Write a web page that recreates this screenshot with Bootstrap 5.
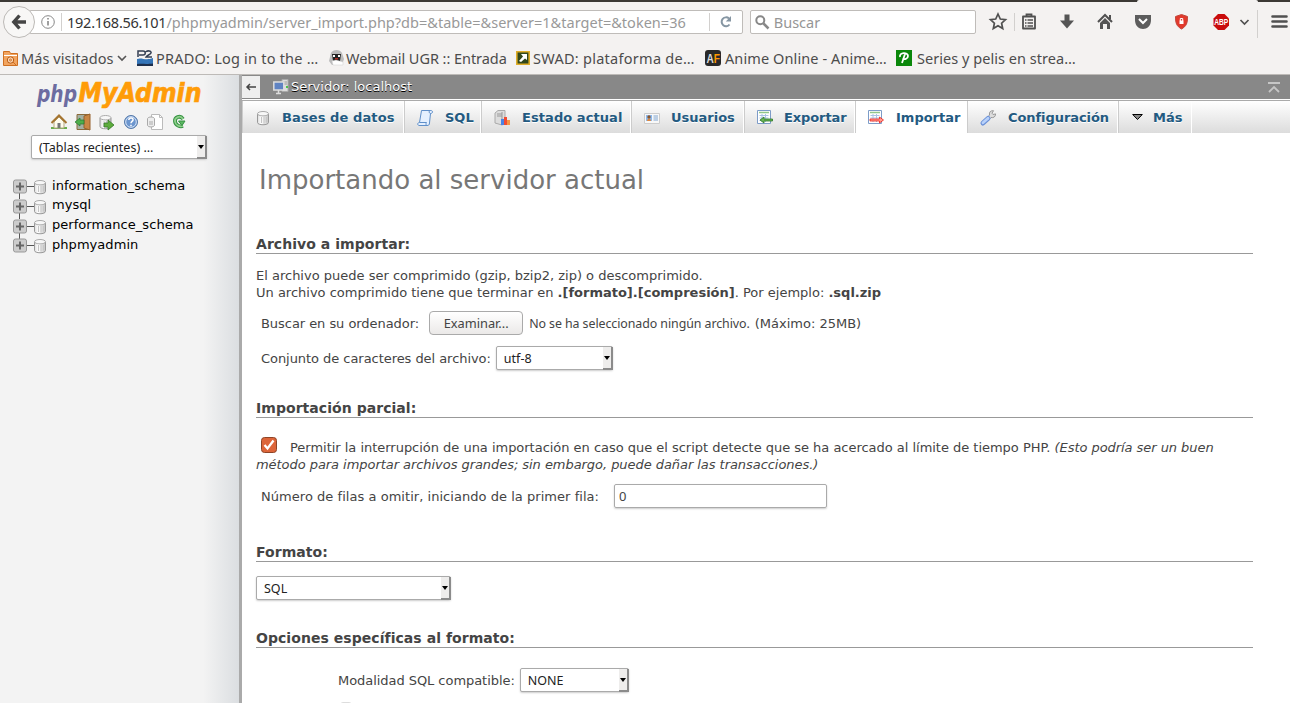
<!DOCTYPE html>
<html lang="es">
<head>
<meta charset="utf-8">
<title>phpMyAdmin - Importar</title>
<link href="https://cdn.jsdelivr.net/npm/bootstrap@5.3.0/dist/css/bootstrap.min.css" rel="stylesheet">
<style>
body{width:1290px;height:703px;overflow:hidden;background:#fff;color:#444;font:13px/16.5px "DejaVu Sans",sans-serif}
svg{display:block;flex:none;overflow:visible}
.ui{font-family:"Noto Sans",sans-serif}
.browser{height:75px;background:#f4f2f1;border-bottom:1px solid #bdbab7;color:#4c4c4c}
.strip{height:2px;background:#3c3935}
.strip i{display:block;margin-left:1137px;width:121px;height:2px;background:#f4f2f1;border-radius:4px 4px 0 0}
.toolrow{height:40px;padding-left:3px}
.back{width:32px;height:32px;border:1px solid #bcb9b6;border-radius:50%;background:#f8f7f6;z-index:1}
.url{width:714px;height:24px;margin-left:-6px;border:1px solid #bfbcb9;border-radius:2px;background:#fff;font-size:14.5px;padding-left:11px;color:#999}
.url b{font-weight:400;color:#333;letter-spacing:-.25px}
.url .path{width:524px;letter-spacing:.02px;white-space:nowrap}
.vline{width:1px;height:18px;background:#d2d0ce}
.find{width:226px;height:24px;margin-left:7px;border:1px solid #bfbcb9;border-radius:2px;background:#fff;color:#969696;font-size:14.5px;padding-left:4px;gap:1px}
.marks{height:31px;padding:1px 0 0 3px;grid-template-columns:134px 192px 187px 189px 191px auto;font-size:14.5px;white-space:nowrap}
.marks>div{gap:3px}
.side{width:239px;background:linear-gradient(90deg,#f3f3f3 85%,#dbdee1);color:#000}
.split{width:3px;background:#aaa}
.logo{margin:5px 0 0 36px}
.icons{margin:6px 0 0 51px;gap:8px}
.pick{position:relative;height:24px;border:1px solid #aaa;border-radius:2px;background:#fff;box-shadow:0 1px 2px #ccc;color:#222;font-size:12.5px;line-height:23px;padding-left:7px}
.pick::before{content:"";position:absolute;right:-1px;top:0;width:10px;height:23px;background:#eeedec;border-right:2px solid #8b8b8b;border-bottom:2px solid #8b8b8b}
.pick::after{content:"";position:absolute;right:2px;top:9px;border:3px solid transparent;border-top:4px solid #000;border-bottom:0}
.recent{width:176px;margin:5px 0 0 31px}
.tree{margin:17px 0 0 13px}
.tree>div{height:19.8px}
.tree span{margin-left:6px;margin-top:0;letter-spacing:.05px}
.tree div:last-child span{margin-top:-1px}
.crumb{height:24px;background:#888;color:#fff;text-shadow:0 1px 0 #000}
.fold{width:18px;height:22px;background:#eee}
.tabs{height:33px;margin-top:1px;border-top:1px solid #aaa;background:linear-gradient(#fff,#dcdcdc);color:#235a81;font-weight:700;text-shadow:0 1px 0 #fff}
.tabs>div{border-right:1px solid #fff;border-left:1px solid #ccc;padding:2px 0 0 12px;gap:11px;white-space:nowrap}
.tabs svg{margin-top:-1px}
.tabs>div.now{background:#fff}
.body-area{padding:0 37px 0 14px}
.title{height:40px;margin:27px 0 0 3px;font-size:26px;line-height:40px;color:#777}
.legend{height:20px;border-bottom:1px solid #999;font-size:14px;font-weight:700;line-height:20px;letter-spacing:.05px;color:#444}
.low{line-height:21px}
.browse{width:94px;height:24px;margin:0 6px 0 9px;border:1px solid #aaa;border-radius:4px;background:linear-gradient(#fff,#ebe9e8);color:#444;font-size:12.8px;line-height:23px}
.line{height:24px;padding:2px 0 0 5px;white-space:nowrap}
.line>div{margin-bottom:2px}
.tight{letter-spacing:-.05px}
.num{width:213px;height:24px;margin-left:15px;border:1px solid #aaa;border-radius:2px;box-shadow:0 1px 2px #ccc;padding-left:4px;line-height:23px}
.tick{display:inline-block;vertical-align:-1px;margin:0 13px 0 5px}
.next{width:12px;height:12px;margin:10px 0 0 84px;border:1px solid #ddd;border-radius:3px}
</style>
</head>
<body>
<svg width="0" height="0" class="position-absolute"><defs>
<linearGradient id="metal"><stop stop-color="#ddd"/><stop offset=".35" stop-color="#fff"/><stop offset="1" stop-color="#c4c4c4"/></linearGradient>
<symbol id="db" viewBox="0 0 16 16"><path d="M2.500 4v8.500c0 3 11 3 11 0V4" fill="url(#metal)" stroke="#999"/><ellipse cx="8" cy="3.700" rx="5.500" ry="2.200" fill="#f7f7f7" stroke="#aaa"/><path d="M6.500 7v6M9 7v6.500M11.300 7v5.500" stroke="#c4c4c4"/></symbol>
<symbol id="sheet" viewBox="0 0 16 16"><path d="M.5.5h13v13H.5z" fill="#fff" stroke="#7d9cc8"/><path d="M2 2.500h10" stroke="#91c78b" stroke-width="1.500"/><path d="M2.500 5.500h9M2.500 8h9M2.500 10.500h9M5 4v8M8.500 4v8" stroke="#abc3e5"/></symbol>
</defs></svg>

<header class="browser ui">
  <div class="strip"><i></i></div>
  <div class="toolrow d-flex align-items-center">
    <div class="back d-flex align-items-center justify-content-center"><svg width="16" height="16" viewBox="0 0 16 16" fill="none" stroke="#454545" stroke-width="3.400"><path d="M8.500 1.500 2.800 8l5.700 6.500M3 8h12"/></svg></div>
    <div class="url d-flex align-items-center">
      <svg width="14" height="14" viewBox="0 0 14 14" fill="none" stroke="#888"><circle cx="7" cy="7" r="6.300"/><path d="M7 6v4.500M7 3v1.500" stroke-width="1.600"/></svg>
      <span class="vline" style="margin:0 5px 0 6px"></span>
      <b>192.168.56.101</b><span class="path">/phpmyadmin/server_import.php?db=&amp;table=&amp;server=1&amp;target=&amp;token=36</span>
      <span class="vline" style="margin-left:19px"></span>
      <svg style="margin-left:9px" width="15" height="14" viewBox="0 0 15 14" fill="none"><path d="M10 3.500A4.400 4.400 0 1 0 10.500 9.500" stroke="#8696a3" stroke-width="2"/><path d="M12 1v5.500H6.800z" fill="#8696a3"/></svg>
    </div>
    <div class="find d-flex align-items-center"><svg width="14" height="14" viewBox="0 0 14 14" fill="none" stroke="#888" stroke-width="2"><circle cx="5.300" cy="5.300" r="4"/><path d="m8.500 8.500 5 5" stroke-width="2.500"/></svg><span>&nbsp;Buscar</span></div>
    <svg width="308" height="32" viewBox="0 0 308 32" style="margin-left:5px" fill="none" stroke="#505050">
      <path d="m17 8 2.300 5 5.200.6-3.900 3.600 1.100 5.300-4.700-2.700-4.700 2.700 1.100-5.300-3.900-3.600 5.200-.6z" stroke-width="1.700"/>
      <path d="M33.500 7v18M276.500 4v28" stroke="#d2d0ce"/>
      <path d="M42 10.500h12v12H42z" stroke-width="1.800" stroke-linejoin="round"/><path d="M45.500 10V8.500h5V10" stroke-width="1.800"/><path d="M44 14h1.500m1 0H52m-8 3h1.500m1 0H52m-8 3h1.500m1 0H52" stroke-width="1.300"/>
      <path d="M83.500 8.500h5v6H93l-7 8-7-8h4.500z" fill="#555" stroke="none"/>
      <path d="m117 16 7-7 7 7" stroke-width="2"/><path d="M119 17l5-5 5 5v6h-3v-5h-4v5h-3z" fill="#555" stroke="none"/><path d="M129 9v4" stroke-width="2"/>
      <path d="M154 9h16v5c0 12-16 12-16 0z" fill="#5d5d5d" stroke="none"/><path d="m158 13 4 4 4-4" stroke="#fff" stroke-width="2"/>
      <path d="m200.500 8.500 6 2c0 7-1 9.500-6 12.500-5-3-6-5.500-6-12.500z" fill="#e2392c" stroke="#c1473b"/><path d="M198.500 14.500h4v3.500h-4z" fill="#fff" stroke="none"/><path d="M199.300 15v-2.500h2.400V15" stroke="#fff"/>
      <path d="m237 8-4.500 4.500v7L237 24h6.500l4.500-4.500v-7L243.500 8z" fill="#c90c0c" stroke="none"/>
      <text x="240.300" y="19.200" text-anchor="middle" font-family="Liberation Sans" font-weight="700" font-size="8.500" textLength="14" lengthAdjust="spacingAndGlyphs" fill="#fff" stroke="none">ABP</text>
      <path d="m259.500 14 4 4 4-4" stroke-width="1.700"/><path d="M291.500 10.500h14M291.500 15.500h14M291.500 20.500h14" stroke-width="2.600" stroke-linecap="round"/>
    </svg>
  </div>
  <div class="marks d-grid align-items-center">
    <div class="d-flex align-items-center"><svg width="15" height="15" viewBox="0 0 15 15" fill="none" stroke="#cf7022"><path d="M.5 14.500V.5h6l1 2h7v12z" fill="#f2a45f"/><path d="M1 4.500h13" stroke="#fff"/><circle cx="7.500" cy="9" r="3.200" fill="#fbd7b5" stroke="#b85d16"/><circle cx="7.500" cy="9" r="1"/><path d="m10 11 3 3"/></svg><span style="letter-spacing:.06px">Más visitados</span><svg width="10" height="8" viewBox="0 0 10 8"><path d="m1 2 4 4 4-4" fill="none" stroke="#555" stroke-width="1.600"/></svg></div>
    <div class="d-flex align-items-center"><svg width="16" height="16" viewBox="0 0 16 16"><path d="M1 7V1h5c3 0 3 4 0 4H2M9 2c1-2 6-1 5 1-1 2-4 2-5 4h6" fill="none" stroke="#333e52" stroke-width="1.500"/><path d="M0 9c5-2 8 2 16-1v6H0z" fill="#3575b8"/><path d="M0 14c6-.5 9 .5 16-.5V16H0z" fill="#1e2f4c"/></svg><span style="letter-spacing:.22px">PRADO: Log in to the …</span></div>
    <div class="d-flex align-items-center"><svg width="15" height="16" viewBox="0 0 15 16"><path d="M2 3c2-4 9-4 11 0l2 6-2 6H3L0 11z" fill="#bbb"/><path d="M3 4h9l-1 7H4z" fill="#222"/><path d="m3 11 4-1 7 2v3H4z" fill="#fff" stroke="#ccc" stroke-width=".5"/><path d="M4 5h2v2H4zm5 0h2v2H9z" fill="#fff"/><path d="M6 8h3v1.500H6z" fill="#b52a22"/></svg><span style="letter-spacing:-.05px;margin-left:-1px">Webmail UGR :: Entrada</span></div>
    <div class="d-flex align-items-center"><svg width="14" height="14" viewBox="0 0 14 14"><path d="M.8.8h12.400v12.400H.8z" fill="#31471b" stroke="#dfad28" stroke-width="1.600"/><path d="M5 3h6v6L9 7.500 5 11l-2-1 4-4.500z" fill="#fff"/></svg><span style="letter-spacing:.27px">SWAD: plataforma de…</span></div>
    <div class="d-flex align-items-center"><svg width="16" height="16" viewBox="0 0 16 16"><rect width="16" height="16" rx="3" fill="#292929"/><text x="1.500" y="12.500" font-family="Liberation Sans" font-size="12" font-weight="700" textLength="13.500" lengthAdjust="spacingAndGlyphs"><tspan fill="#ddd">A</tspan><tspan fill="#ff9900">F</tspan></text></svg><span style="letter-spacing:.1px;margin-left:1px">Anime Online - Anime…</span></div>
    <div class="d-flex align-items-center"><svg width="16" height="16" viewBox="0 0 16 16"><path d="M0 0h16v16H0z" fill="#0a870a"/><path d="M4 7c-1-5 8-5 8-1 0 3-4 4-5 2M9 4l-3 9" stroke="#fff" stroke-width="1.800" fill="none"/></svg><span style="letter-spacing:.04px;margin-left:2px">Series y pelis en strea…</span></div>
  </div>
</header>

<div class="d-flex" style="height:628px">
  <aside class="side flex-shrink-0">
    <svg class="logo" width="168" height="28" font-family="DejaVu Sans" font-weight="700" font-style="italic"><text x="1" y="22" font-size="23.500" fill="#6c6ca0" textLength="40" lengthAdjust="spacingAndGlyphs">php</text><text x="42.500" y="22" font-size="26" fill="#ff9c08" stroke="#ff9c08" stroke-width=".7" textLength="123" lengthAdjust="spacingAndGlyphs">MyAdmin</text></svg>
    <div class="icons d-flex">
      <svg width="16" height="16" viewBox="0 0 16 16"><path d="M0 14h16" stroke="#69ad4c" stroke-width="2"/><path d="M3 8v6h10V8L8 3z" fill="#fffbed" stroke="#b5a981"/><path d="M.5 9 8 1.500 15.500 9" fill="none" stroke="#a57430" stroke-width="2"/><path d="M6.500 9h3v5h-3z" fill="#777"/></svg>
      <svg width="16" height="16" viewBox="0 0 16 16"><path d="M2 .5h12v15H2z" fill="#a3b0a3" stroke="#8b6a3a"/><path d="m9 2 6-2v16l-6-2z" fill="#c98644" stroke="#96612d"/><path d="M0 8l5-4v2h4v4H5v2z" fill="#4dae4b" stroke="#287532" stroke-width=".7"/></svg>
      <svg width="16" height="16" viewBox="0 0 16 16"><use href="#db" x="-1.500" width="16" height="16"/><path d="M5 9h4V6l6 5-6 5v-3H5z" fill="#5dad3c" stroke="#35762b" stroke-width=".8"/></svg>
      <svg width="16" height="16" viewBox="0 0 16 16"><circle cx="8" cy="8" r="6.500" fill="#6c96cf" stroke="#567aa9"/><circle cx="8" cy="8" r="5.300" fill="none" stroke="#d8e5f7"/><path d="M5.800 6c.2-3 4.800-2.500 4.200 0-.3 1.500-2 1.500-2 3.300M8 10.700v1.500" fill="none" stroke="#fff" stroke-width="1.500"/></svg>
      <svg width="16" height="16" viewBox="0 0 16 16"><path d="M4.500.5h8l3 3v12h-11z" fill="#fff" stroke="#bbb"/><path d="M12.500.5v3h3" fill="none" stroke="#bbb"/><path d="M.5 4.500c1-2 6-2 7 0v7c-1 2-6 2-7 0z" fill="#eee" stroke="#aaa"/><path d="M3 7v4M5 7v4" stroke="#aaa"/></svg>
      <svg width="16" height="16" viewBox="0 0 16 16"><path d="M12 5C9 .5 3.500 3.500 4 7.500c.5 4 5 5.500 8 4.500" fill="none" stroke="#369243" stroke-width="3.800"/><path d="M12 5C9 .5 3.500 3.500 4 7.500c.5 4 5 5.500 8 4.500" fill="none" stroke="#8fd08b" stroke-width="1.800"/><path d="M7.500 7H14l-3 4.500z" fill="#5cb862" stroke="#369243"/></svg>
    </div>
    <div class="pick recent ui">(Tablas recientes) ...</div>
    <div class="tree">
      <div class="d-flex align-items-center"><svg width="33" height="20" viewBox="0 0 33 20"><path d="M6.500 17v6M14 10.500h8" stroke="#555"/><rect x=".5" y="4" width="13" height="13" rx="2" fill="#ccc" stroke="#999"/><path d="M3 10.500h8M7 6.500v8" stroke="#666" stroke-width="2"/><use href="#db" x="19" y="3" width="16" height="16"/></svg><span>information_schema</span></div>
      <div class="d-flex align-items-center"><svg width="33" height="20" viewBox="0 0 33 20"><path d="M6.500 17v6M14 10.500h8" stroke="#555"/><rect x=".5" y="4" width="13" height="13" rx="2" fill="#ccc" stroke="#999"/><path d="M3 10.500h8M7 6.500v8" stroke="#666" stroke-width="2"/><use href="#db" x="19" y="3" width="16" height="16"/></svg><span>mysql</span></div>
      <div class="d-flex align-items-center"><svg width="33" height="20" viewBox="0 0 33 20"><path d="M6.500 17v6M14 10.500h8" stroke="#555"/><rect x=".5" y="4" width="13" height="13" rx="2" fill="#ccc" stroke="#999"/><path d="M3 10.500h8M7 6.500v8" stroke="#666" stroke-width="2"/><use href="#db" x="19" y="3" width="16" height="16"/></svg><span>performance_schema</span></div>
      <div class="d-flex align-items-center"><svg width="33" height="20" viewBox="0 0 33 20"><path d="M14 10.500h8" stroke="#555"/><rect x=".5" y="4" width="13" height="13" rx="2" fill="#ccc" stroke="#999"/><path d="M3 10.500h8M7 6.500v8" stroke="#666" stroke-width="2"/><use href="#db" x="19" y="3" width="16" height="16"/></svg><span>phpmyadmin</span></div>
    </div>
  </aside>
  <div class="split flex-shrink-0"></div>
  <main class="flex-grow-1">
    <div class="crumb d-flex align-items-center">
      <div class="fold d-flex align-items-center justify-content-center"><svg width="10" height="8" viewBox="0 0 10 8"><path d="M10 4H2M4 1 1 4l3 3" fill="none" stroke="#444" stroke-width="1.500"/></svg></div>
      <svg width="16" height="16" viewBox="0 0 16 16" style="margin:0 2px 0 13px"><path d="M9 .5h6v12H9z" fill="#ddd" stroke="#aaa"/><path d="M10 3h4M10 5h4" stroke="#999"/><path d="M13 7h2v2h-2z" fill="#4bc34b"/><path d="M.8 3h10v8H.8z" fill="#5f83c3" stroke="#ddd" stroke-width="1.500"/><path d="M5.500 11v3M3 14.500h5" stroke="#ddd" stroke-width="1.500"/></svg>
      <span>Servidor: localhost</span>
      <svg class="ms-auto" width="12" height="11" viewBox="0 0 12 11" style="margin-right:10px"><path d="M0 1h12M1 10l5-5 5 5" fill="none" stroke="#c6c6c6" stroke-width="1.800"/></svg>
    </div>
    <nav class="tabs d-flex">
      <div class="d-flex align-items-center" style="width:162px"><svg width="16" height="16"><use href="#db" width="16" height="16"/></svg><span style="letter-spacing:.1px">Bases de datos</span></div>
      <div class="d-flex align-items-center" style="width:77px;gap:12px"><svg width="16" height="16" viewBox="0 0 16 16"><path d="M4.500.5h9c3 0 2.500 3 0 3l-1 9.500c0 2-1 2.500-2.500 2.500H2c-2-.5-1.500-3 .5-3z" fill="#e4f0ff" stroke="#5f8fc9"/><path d="M13.500.5c-2 0-1.500 3 0 3M2.500 12.500h7c-1 1 0 3-.5 3" fill="none" stroke="#5f8fc9"/></svg>SQL</div>
      <div class="d-flex align-items-center" style="width:150px;gap:12px"><svg width="16" height="16" viewBox="0 0 16 16"><path d="M1 3 4 .5h7v13L8 15 1 13z" fill="#ddd" stroke="#aaa"/><path d="M3 4h5M3 6h5M8 2v11" stroke="#999"/><path d="M7 9h3v6H7z" fill="#4a83e5"/><path d="M10 7h3v8h-3z" fill="#f04c32"/><path d="M13 10h3v5h-3z" fill="#f79646"/></svg><span style="letter-spacing:.07px">Estado actual</span></div>
      <div class="d-flex align-items-center" style="width:113px"><svg width="16" height="16" viewBox="0 0 16 16"><path d="M.5 3.500h15v10H.5z" fill="#f8f8f8" stroke="#ccc"/><path d="M2 5h6v6H2z" fill="#8cb9ed"/><circle cx="5" cy="7" r="1.700" fill="#8b562c"/><path d="M3 11c0-3 4-3 4 0z" fill="#dd873f"/><path d="M9.500 6H14M9.500 8H14M9.500 10H14" stroke="#7ea4cf"/></svg>Usuarios</div>
      <div class="d-flex align-items-center" style="width:111px"><svg width="16" height="16" viewBox="0 0 16 16"><use href="#sheet" width="16" height="16"/><path d="m3 10 4-3v2h8.500v2H7v2z" fill="#67b354" stroke="#2d7929" stroke-width=".8"/></svg><span style="letter-spacing:-.1px">Exportar</span></div>
      <div class="now d-flex align-items-center" style="width:112px;gap:12px"><svg width="16" height="16" viewBox="0 0 16 16"><use href="#sheet" width="16" height="16"/><path d="m15.500 10-4-3v2H2v2h9.500v2z" fill="#ff9c91" stroke="#ef2118" stroke-width=".8"/></svg>Importar</div>
      <div class="d-flex align-items-center" style="width:151px;gap:12px"><svg width="16" height="16" viewBox="0 0 16 16"><path d="m7 8 2.500-3C9 2 10.500.5 13.500.7L12 3.200l1 1.300 2.600-.6C15.500 7 13.500 8 11 7.500L8.500 10z" fill="#ddd" stroke="#999"/><path d="m3 13 5-4.500" stroke="#6b91d8" stroke-width="5" stroke-linecap="round"/><path d="m3 12.700 5-4.500" stroke="#b8d1fa" stroke-width="2.800" stroke-linecap="round"/></svg><span style="letter-spacing:-.07px">Configuración</span></div>
      <div class="d-flex align-items-center" style="width:74px;padding-left:13px;gap:10px"><svg width="11" height="7" viewBox="0 0 11 7"><path d="M.7.5h9.600L5.500 5.500z" fill="#888" stroke="#000"/></svg>Más</div>
    </nav>
    <div class="body-area">
      <h2 class="title">Importando al servidor actual</h2>
      <div class="legend" style="margin-top:34px">Archivo a importar:</div>
      <p class="mb-0" style="margin-top:14px">El archivo puede ser comprimido (gzip, bzip2, zip) o descomprimido.<br>Un archivo comprimido tiene que terminar en <b>.[formato].[compresión]</b>. Por ejemplo: <b>.sql.zip</b></p>
      <div class="line d-flex align-items-center" style="margin-top:10px"><span class="tight">Buscar en su ordenador:</span><div class="browse ui text-center" style="margin-left:10px">Examinar...</div><span class="ui" style="font-size:12.4px;letter-spacing:-.07px">No se ha seleccionado ningún archivo.</span><span style="margin-left:5px">(Máximo: 25MB)</span></div>
      <div class="line d-flex align-items-center" style="margin-top:11px"><span class="tight">Conjunto de caracteres del archivo:</span><div class="pick ui" style="width:117px;margin-left:5px">utf-8</div></div>
      <div class="legend low" style="margin-top:28px">Importación parcial:</div>
      <p class="mb-0" style="margin-top:19px"><svg class="tick" width="16" height="16" viewBox="0 0 16 16"><rect x=".5" y=".5" width="15" height="15" rx="3" fill="#dd6539" stroke="#8e4426"/><path d="m3.500 8 3 3.500 6-8" fill="none" stroke="#fff" stroke-width="2.300"/></svg><span style="letter-spacing:-.022px">Permitir la interrupción de una importación en caso que el script detecte que se ha acercado al límite de tiempo PHP. </span><em style="letter-spacing:-.05px">(Esto podría ser un buen método para importar archivos grandes; sin embargo, puede dañar las transacciones.)</em></p>
      <div class="line d-flex align-items-center" style="margin-top:11px"><span style="letter-spacing:.04px">Número de filas a omitir, iniciando de la primer fila:</span><div class="num ui">0</div></div>
      <div class="legend" style="margin-top:34px">Formato:</div>
      <div class="pick ui" style="width:195px;margin-top:14px">SQL</div>
      <div class="legend low" style="margin-top:28px">Opciones específicas al formato:</div>
      <div class="line d-flex align-items-center" style="margin-top:20px;padding-left:82px"><span class="tight">Modalidad SQL compatible:</span><div class="pick ui" style="width:109px;margin-left:5px">NONE</div></div>
      <div class="next"></div>
    </div>
  </main>
</div>
</body>
</html>
